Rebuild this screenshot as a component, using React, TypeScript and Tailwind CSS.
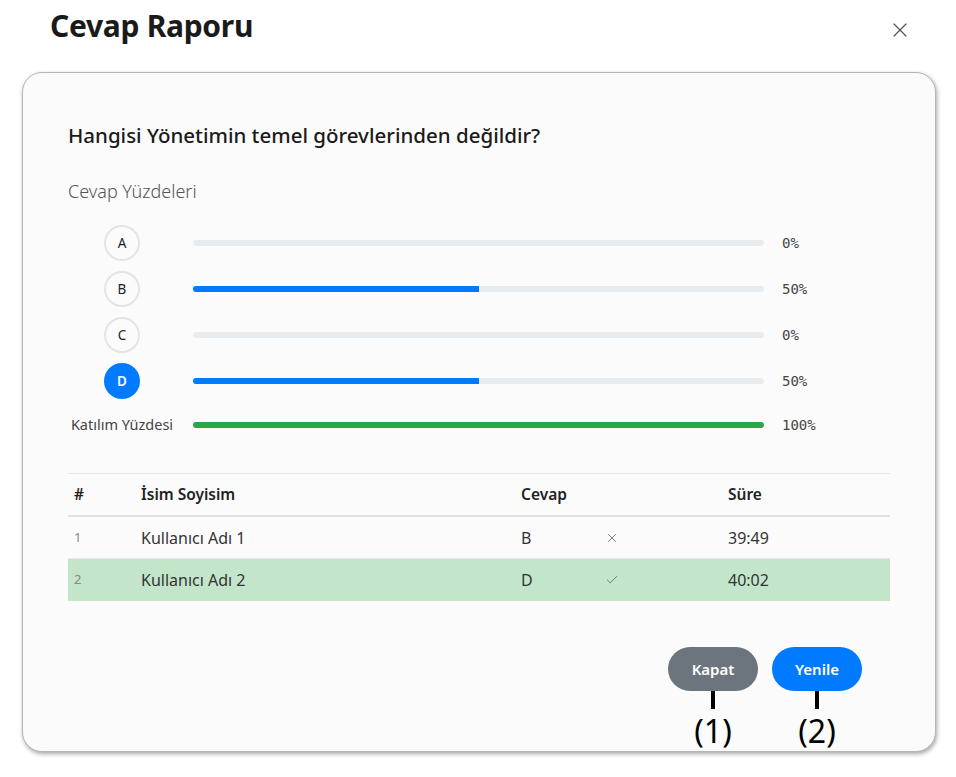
import { X, Check } from 'lucide-react';

const options = [
  { label: 'A', pct: 0, selected: false },
  { label: 'B', pct: 50, selected: false },
  { label: 'C', pct: 0, selected: false },
  { label: 'D', pct: 50, selected: true },
];

const rows = [
  { no: 1, name: 'Kullanıcı Adı 1', answer: 'B', correct: false, time: '39:49' },
  { no: 2, name: 'Kullanıcı Adı 2', answer: 'D', correct: true, time: '40:02' },
];

const Bar = ({ pct, color }: { pct: number; color: string }) => (
  <div className="h-[6px] flex-1 rounded-full bg-[#e9ecef] overflow-hidden">
    <div className={`h-full ${color}`} style={{ width: `${pct}%` }} />
  </div>
);

const App = () => {
  return (
    <div className="w-[956px] h-[777px] bg-white font-['Noto_Sans',sans-serif] text-[#212529] overflow-hidden">
      <div className="flex items-center justify-between pl-[50px] pr-[44px] pt-[5px] h-[45px]">
        <h1 className="text-[30px] font-bold tracking-[-0.3px] text-[#1a1a1a]">Cevap Raporu</h1>
        <X className="w-[24px] h-[24px] text-[#555] mt-[10px]" strokeWidth={1.2} />
      </div>

      <div className="ml-[22px] mr-[20px] mt-[27px] h-[680px] rounded-[20px] bg-[#fbfbfb] border border-[#b5b5b5] shadow-[1px_2px_4px_rgba(0,0,0,0.35)] px-[45px] pt-[48px] flex flex-col">
        <h2 className="text-[20.5px] font-medium leading-[28px] text-[#1a1a1a]">
          Hangisi Yönetimin temel görevlerinden değildir?
        </h2>
        <p className="mt-[30px] text-[18px] font-light text-[#555] leading-[24px]">Cevap Yüzdeleri</p>

        <div className="mt-[22px] flex flex-col gap-[10px]">
          {options.map((o) => (
            <div key={o.label} className="flex items-center h-[36px]">
              <div className="w-[108px] flex justify-center">
                <div
                  className={`w-[36px] h-[36px] rounded-full flex items-center justify-center text-[13.5px] ${
                    o.selected ? 'bg-[#007bff] text-white font-semibold' : 'border-2 border-[#e4e4e4] text-[#222]'
                  }`}
                >
                  {o.label}
                </div>
              </div>
              <div className="ml-[17px] flex flex-1 items-center">
                <Bar pct={o.pct} color="bg-[#007bff]" />
                <span className="w-[126px] pl-[18px] font-['DejaVu_Sans_Mono',monospace] text-[14px] text-[#444]">
                  {o.pct}%
                </span>
              </div>
            </div>
          ))}
          <div className="flex items-center h-[36px] -mt-[2px]">
            <div className="w-[108px] flex justify-center">
              <span className="text-[14.5px] text-[#444] whitespace-nowrap">Katılım Yüzdesi</span>
            </div>
            <div className="ml-[17px] flex flex-1 items-center">
              <Bar pct={100} color="bg-[#28a745]" />
              <span className="w-[126px] pl-[18px] font-['DejaVu_Sans_Mono',monospace] text-[14px] text-[#444]">
                100%
              </span>
            </div>
          </div>
        </div>

        <div className="mt-[30px] border-t border-[#e6e6e6]">
          <div className="grid grid-cols-[67px_380px_84px_123px_1fr] h-[43px] items-center border-b-2 border-[#dee2e6] text-[15.5px] font-semibold text-[#222]">
            <span className="pl-[6px]">#</span>
            <span className="pl-[6px]">İsim Soyisim</span>
            <span className="pl-[6px]">Cevap</span>
            <span />
            <span className="pl-[6px]">Süre</span>
          </div>
          {rows.map((r) => (
            <div
              key={r.no}
              className={`grid grid-cols-[67px_380px_84px_123px_1fr] h-[42px] items-center text-[16px] text-[#333] ${
                r.correct ? 'bg-[#c3e6cb]' : 'border-b border-[#e6e6e6]'
              }`}
            >
              <span className="pl-[6px] text-[13px] text-[#888]">{r.no}</span>
              <span className="pl-[6px]">{r.name}</span>
              <span className="pl-[6px]">{r.answer}</span>
              <span className="pl-[6px]">
                {r.correct ? (
                  <Check className="w-[14px] h-[14px] text-[#555]" strokeWidth={1.3} />
                ) : (
                  <X className="w-[14px] h-[14px] text-[#555]" strokeWidth={1.3} />
                )}
              </span>
              <span className="pl-[6px]">{r.time}</span>
            </div>
          ))}
        </div>

        <div className="mt-[46px] flex justify-end gap-[14px] pr-[28px]">
          <div className="flex flex-col items-center">
            <button className="w-[90px] h-[44px] rounded-full bg-[#6c757d] text-white text-[15px] font-semibold">
              Kapat
            </button>
            <div className="w-[4px] h-[18px] bg-black" />
            <span className="mt-[2px] text-[32px] leading-[40px] text-black">(1)</span>
          </div>
          <div className="flex flex-col items-center">
            <button className="w-[90px] h-[44px] rounded-full bg-[#007bff] text-white text-[15px] font-semibold">
              Yenile
            </button>
            <div className="w-[4px] h-[18px] bg-black" />
            <span className="mt-[2px] text-[32px] leading-[40px] text-black">(2)</span>
          </div>
        </div>
      </div>
    </div>
  );
};

export default App;
